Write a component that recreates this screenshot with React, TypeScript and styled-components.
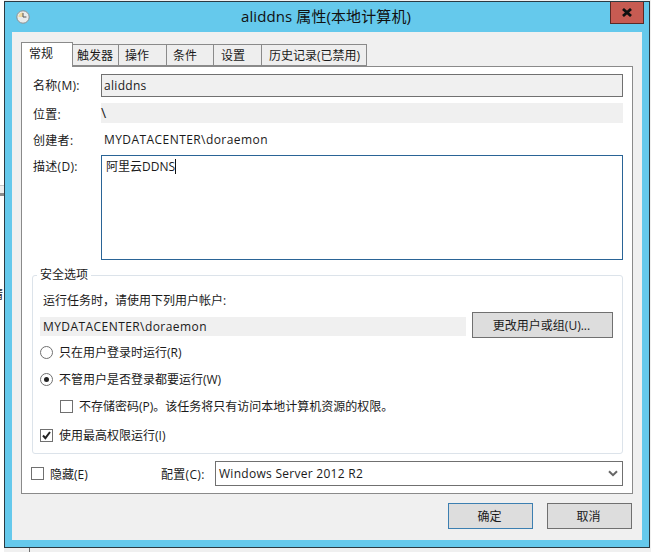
import React from "react";
import styled, { createGlobalStyle } from "styled-components";

const FONT = `"Open Sans", "Noto Sans CJK SC", sans-serif`;

const GlobalStyle = createGlobalStyle`
  html, body {
    margin: 0;
    padding: 0;
    background: #f0f0f0;
  }
`;

const Page = styled.div`
  position: relative;
  width: 651px;
  height: 552px;
  overflow: hidden;
  padding: 1px 0 0 4px;
  box-sizing: border-box;
  font-family: ${FONT};
  font-size: 12px;
  color: #1a1a1a;
  background: linear-gradient(#fff, #fff) left top / 4px 100% no-repeat, #f0f0f0;
`;

const Window = styled.div`
  width: 646px;
  height: 547px;
  box-sizing: border-box;
  border: 1px solid #2b3a42;
  background: #65c9ec;
  display: flex;
  flex-direction: column;
  padding: 0 7px 7px;
`;

const TitleBar = styled.div`
  position: relative;
  height: 30px;
  flex: none;
  display: flex;
  align-items: center;
  justify-content: center;
  padding: 0 2px 4px 0;
  box-sizing: border-box;
`;

const Title = styled.div`
  font-size: 15px;
  letter-spacing: 0.1px;
  color: #111;
`;

const ClockIcon = styled.svg`
  position: absolute;
  left: 4px;
  top: 8px;
`;

const CloseButton = styled.div`
  position: absolute;
  right: -2px;
  top: 0;
  width: 34px;
  height: 22px;
  box-sizing: border-box;
  background: #c75b52;
  border: 1px solid #5a2a26;
  border-top: none;
  display: flex;
  align-items: center;
  justify-content: center;
`;

const Client = styled.div`
  flex: 1;
  background: #f0f0f0;
  padding: 10px 9px 0;
  display: flex;
  flex-direction: column;
`;

const TabStrip = styled.div`
  display: flex;
  align-items: flex-end;
  height: 24px;
  position: relative;
  z-index: 1;
`;

const Tab = styled.div<{ $active?: boolean; $w: number; $pl: number }>`
  width: ${(p) => p.$w}px;
  height: ${(p) => (p.$active ? 25 : 22)}px;
  margin-bottom: ${(p) => (p.$active ? -1 : 0)}px;
  box-sizing: border-box;
  border: 1px solid #8a8a8a;
  border-left-width: ${(p) => (p.$active ? 1 : 0)}px;
  border-bottom-width: ${(p) => (p.$active ? 0 : 1)}px;
  background: ${(p) => (p.$active ? "#fff" : "#eeeeee")};
  padding: 2px 0 0 ${(p) => p.$pl}px;
  line-height: 17px;
  white-space: nowrap;
`;

const TabPanel = styled.div`
  width: 612px;
  height: 428px;
  box-sizing: border-box;
  border: 1px solid #8a8a8a;
  background: #fff;
  padding: 7px 9px 0 10px;
`;

const FieldRow = styled.div<{ $h: number; $mb?: number }>`
  display: flex;
  height: ${(p) => p.$h}px;
  margin-bottom: ${(p) => p.$mb ?? 0}px;
`;

const FieldLabel = styled.div`
  width: 69px;
  flex: none;
  box-sizing: border-box;
  line-height: 24px;
  padding-left: 1px;
  letter-spacing: 0.3px;
`;

const NameBox = styled.div`
  flex: 1;
  box-sizing: border-box;
  border: 1px solid #707070;
  background: #f0f0f0;
  padding-left: 2px;
  line-height: 21px;
  letter-spacing: 0.3px;
`;

const ReadOnlyText = styled.div`
  flex: 1;
  background: #f0f0f0;
  font-size: 14px;
  line-height: 19px;
`;

const PlainText = styled.div`
  flex: 1;
  padding-left: 3px;
  line-height: 22px;
  letter-spacing: 0.43px;
`;

const DescBox = styled.div`
  flex: 1;
  box-sizing: border-box;
  border: 1px solid #2a6496;
  padding: 2px 0 0 4px;
  line-height: 17px;
`;

const Caret = styled.span`
  display: inline-block;
  width: 1px;
  height: 15px;
  background: #111;
  vertical-align: -3px;
`;

const SecurityGroup = styled.fieldset`
  margin: 8px 0 0;
  height: 186px;
  box-sizing: border-box;
  border: 1px solid #dce3ea;
  border-radius: 3px;
  padding: 10px 9px 0 7px;
  min-width: 0;
  position: relative;
`;

const GroupTitle = styled.legend`
  padding: 0 3px;
  margin-left: -3px;
  line-height: 14px;
  font-size: 12px;
`;

const RunAsLabel = styled.div`
  padding: 1px 0 0 3px;
  line-height: 16px;
  margin-bottom: 3px;
`;

const AccountRow = styled.div`
  display: flex;
  align-items: center;
  gap: 6px;
  height: 26px;
  margin-bottom: 6px;
`;

const AccountName = styled.div`
  width: 426px;
  height: 19px;
  margin-top: 3px;
  background: #f0f0f0;
  padding-left: 3px;
  box-sizing: border-box;
  line-height: 19px;
  letter-spacing: 0.43px;
`;

const PushButton = styled.div<{ $w: number; $primary?: boolean }>`
  width: ${(p) => p.$w}px;
  height: 26px;
  box-sizing: border-box;
  border: 1px solid ${(p) => (p.$primary ? "#3c7fb1" : "#707070")};
  background: #dddddd;
  padding-right: 2px;
  display: flex;
  align-items: center;
  justify-content: center;
`;

const OptionRow = styled.div<{ $indent?: number; $mb: number }>`
  display: flex;
  align-items: center;
  height: 16px;
  padding-left: ${(p) => p.$indent ?? 0}px;
  margin-bottom: ${(p) => p.$mb}px;
`;

const Radio = styled.span<{ $checked?: boolean }>`
  width: 13px;
  height: 13px;
  box-sizing: border-box;
  border: 1px solid #707070;
  border-radius: 50%;
  margin-right: 6px;
  flex: none;
  display: flex;
  align-items: center;
  justify-content: center;
  &::after {
    content: "";
    width: 5px;
    height: 5px;
    border-radius: 50%;
    background: ${(p) => (p.$checked ? "#222" : "transparent")};
  }
`;

const Checkbox = styled.span`
  width: 13px;
  height: 13px;
  box-sizing: border-box;
  border: 1px solid #707070;
  margin-right: 6px;
  flex: none;
  position: relative;
`;

const CheckMark = styled.svg`
  position: absolute;
  left: 0;
  top: 0;
`;

const BottomRow = styled.div`
  display: flex;
  align-items: center;
  height: 25px;
  margin-top: 7px;
`;

const HiddenOption = styled.div`
  display: flex;
  align-items: center;
  width: 130px;
  margin-left: -1px;
`;

const ConfigLabel = styled.div`
  width: 54px;
  letter-spacing: 0.3px;
  white-space: nowrap;
`;

const ConfigSelect = styled.div`
  flex: 1;
  height: 25px;
  box-sizing: border-box;
  border: 1px solid #707070;
  padding: 0 4px 0 3px;
  display: flex;
  align-items: center;
  justify-content: space-between;
  letter-spacing: 0.28px;
`;

const Footer = styled.div`
  display: flex;
  justify-content: flex-end;
  gap: 14px;
  margin: 9px 1px 0 0;
  width: 611px;
`;

const BackdropGlyph = styled.div`
  position: absolute;
  left: -9px;
  top: 285px;
  font-size: 12px;
  color: #222;
`;

const BackdropBar = styled.div`
  position: absolute;
  left: 0;
  top: 185px;
  width: 4px;
  height: 11px;
  box-sizing: border-box;
  background: #f0f0f0;
  border-top: 1px solid #c8c8c8;
  border-bottom: 3px solid #8c8c8c;
`;

const BackdropLine = styled.div`
  position: absolute;
  left: 29px;
  top: 548px;
  width: 1px;
  height: 4px;
  background: #707070;
`;

const tabs = [
  { label: "触发器", w: 46, pl: 4 },
  { label: "操作", w: 48, pl: 6 },
  { label: "条件", w: 47, pl: 6 },
  { label: "设置", w: 48, pl: 7 },
  { label: "历史记录(已禁用)", w: 105, pl: 7 },
];

export default function App() {
  return (
    <Page>
      <GlobalStyle />
      <BackdropBar />
      <BackdropGlyph>精</BackdropGlyph>
      <BackdropLine />
      <Window>
        <TitleBar>
          <ClockIcon width="14" height="14" viewBox="0 0 14 14">
            <circle cx="7" cy="7" r="6.2" fill="#e9ecec" stroke="#8a8f90" />
            <path d="M7 7V2.4A4.6 4.6 0 0 0 2.4 7z" fill="#f0d9a0" />
            <path d="M7 3v4h3.4" fill="none" stroke="#555" strokeWidth="1" />
          </ClockIcon>
          <Title>aliddns 属性(本地计算机)</Title>
          <CloseButton>
            <svg width="12" height="9" viewBox="0 0 12 9">
              <path d="M2 1l8 7M10 1L2 8" stroke="#111" strokeWidth="2.8" />
            </svg>
          </CloseButton>
        </TitleBar>
        <Client>
          <TabStrip>
            <Tab $active $w={52} $pl={7}>常规</Tab>
            {tabs.map((t) => (
              <Tab key={t.label} $w={t.w} $pl={t.pl}>{t.label}</Tab>
            ))}
          </TabStrip>
          <TabPanel>
            <FieldRow $h={23} $mb={6}>
              <FieldLabel>名称(M):</FieldLabel>
              <NameBox>aliddns</NameBox>
            </FieldRow>
            <FieldRow $h={20} $mb={6}>
              <FieldLabel>位置:</FieldLabel>
              <ReadOnlyText>\</ReadOnlyText>
            </FieldRow>
            <FieldRow $h={24} $mb={2}>
              <FieldLabel>创建者:</FieldLabel>
              <PlainText>MYDATACENTER\doraemon</PlainText>
            </FieldRow>
            <FieldRow $h={105}>
              <FieldLabel>描述(D):</FieldLabel>
              <DescBox>阿里云DDNS<Caret /></DescBox>
            </FieldRow>
            <SecurityGroup>
              <GroupTitle>安全选项</GroupTitle>
              <RunAsLabel>运行任务时，请使用下列用户帐户:</RunAsLabel>
              <AccountRow>
                <AccountName>MYDATACENTER\doraemon</AccountName>
                <PushButton $w={141}>更改用户或组(U)...</PushButton>
              </AccountRow>
              <OptionRow $mb={11}>
                <Radio />只在用户登录时运行(R)
              </OptionRow>
              <OptionRow $mb={11}>
                <Radio $checked />不管用户是否登录都要运行(W)
              </OptionRow>
              <OptionRow $indent={20} $mb={13}>
                <Checkbox />不存储密码(P)。该任务将只有访问本地计算机资源的权限。
              </OptionRow>
              <OptionRow $mb={0}>
                <Checkbox>
                  <CheckMark width="11" height="11" viewBox="0 0 11 11">
                    <path d="M2 5.5l2.4 2.6L9 2" fill="none" stroke="#222" strokeWidth="2" />
                  </CheckMark>
                </Checkbox>
                使用最高权限运行(I)
              </OptionRow>
            </SecurityGroup>
            <BottomRow>
              <HiddenOption>
                <Checkbox />隐藏(E)
              </HiddenOption>
              <ConfigLabel>配置(C):</ConfigLabel>
              <ConfigSelect>
                Windows Server 2012 R2
                <svg width="10" height="7" viewBox="0 0 10 7">
                  <path d="M1 1.2l4 4 4-4" fill="none" stroke="#666" strokeWidth="2" />
                </svg>
              </ConfigSelect>
            </BottomRow>
          </TabPanel>
          <Footer>
            <PushButton $primary $w={85}>确定</PushButton>
            <PushButton $w={85}>取消</PushButton>
          </Footer>
        </Client>
      </Window>
    </Page>
  );
}
